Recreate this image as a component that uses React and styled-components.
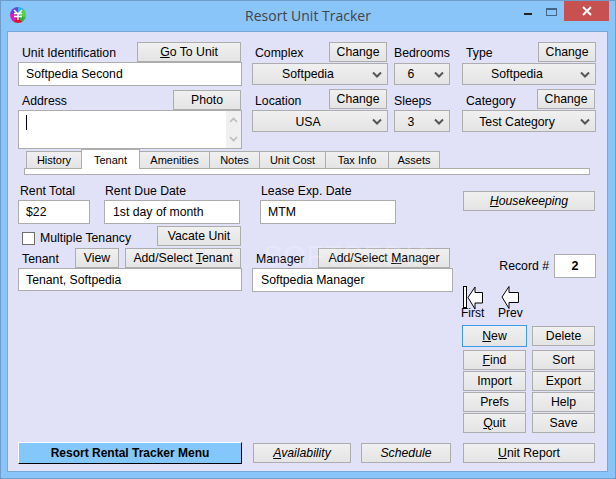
import React from 'react';
import styled, { createGlobalStyle } from 'styled-components';

const GlobalStyle = createGlobalStyle`
  html, body { margin: 0; padding: 0; background: #8ac5f9; }
  * { box-sizing: border-box; }
  body { font-family: "Liberation Sans", Arial, sans-serif; font-size: 12.25px; color: #000; }
`;

const Window = styled.div`
  position: relative;
  width: 616px;
  height: 479px;
  display: flex;
  flex-direction: column;
  background: #8ac5f9;
  border: 1px solid #6f9ccb;
  overflow: hidden;
`;

const TitleBar = styled.div`
  height: 29px;
  flex: none;
  display: grid;
  grid-template-columns: 1fr auto 1fr;
  align-items: center;
`;

const AppIcon = styled.div`
  width: 16px;
  height: 16px;
  margin-left: 9px;
  margin-top: -1px;
  border-radius: 50%;
  background: conic-gradient(#27b7d8 0 12%, #55d04a 12% 30%, #2fb53a 30% 42%, #d81b2c 42% 58%, #d41fc0 58% 78%, #6a3fe0 78% 100%);
  display: flex;
  align-items: center;
  justify-content: center;
`;

const Title = styled.div`
  font-family: "Open Sans", sans-serif;
  font-size: 14px;
  color: #444;
`;

const Controls = styled.div`
  display: flex;
  justify-content: flex-end;
  align-items: flex-start;
  height: 100%;
  padding-right: 6px;
`;

const MinBtn = styled.div`
  width: 8px;
  height: 2px;
  background: #222;
  margin-top: 12px;
  margin-right: 14px;
`;

const MaxBtn = styled.div`
  width: 11px;
  height: 8px;
  border: 1px solid #44658a;
  border-top-width: 2px;
  margin-top: 7px;
  margin-right: 7px;
`;

const CloseBtn = styled.div`
  width: 45px;
  height: 20px;
  background: #c75050;
  display: flex;
  align-items: center;
  justify-content: center;
`;

const Client = styled.div`
  flex: 1;
  margin: 1px 7px 6px 6px;
  padding: 10px 0 6px 10px;
  background: #e1e1f8;
  border: 1px solid #78a6d6;
  display: flex;
  flex-direction: column;
`;

const TopRow = styled.div`
  display: flex;
  height: 108px;
`;

const Col = styled.div`
  width: ${p => p.$w}px;
  margin-left: ${p => p.$ml || 0}px;
  display: flex;
  flex-direction: column;
`;

const Head = styled.div`
  height: 20px;
  margin-top: ${p => p.$mt || 0}px;
  display: flex;
  align-items: center;
  justify-content: space-between;
  padding-left: ${p => p.$pl ?? 4}px;
  padding-right: ${p => p.$pr ?? 1}px;
`;

const Label = styled.span`
  white-space: nowrap;
  margin-top: ${p => p.$mt ?? 1}px;
`;

const Button = styled.button`
  width: ${p => (p.$w ? `${p.$w}px` : 'auto')};
  height: ${p => p.$h || 20}px;
  margin-top: ${p => p.$mt || 0}px;
  margin-left: ${p => p.$ml || 0}px;
  padding: 0;
  flex: none;
  font: inherit;
  font-style: ${p => (p.$italic ? 'italic' : 'normal')};
  color: #000;
  white-space: nowrap;
  border: 1px solid #adadad;
  background: linear-gradient(#f0f0f0, #e4e4e4);
`;

const FocusButton = styled(Button)`
  width: 65px;
  height: 22px;
  margin: -1px 0 0 -1px;
  border-color: #3c9be8;
`;

const MenuButton = styled(Button)`
  width: 224px;
  height: 22px;
  font-weight: bold;
  font-size: 12px;
  background: #84c8fb;
  border-width: 1px;
  border-color: #fff #000 #000 #fff;
`;

const TextInput = styled.div`
  width: ${p => (p.$w ? `${p.$w}px` : '100%')};
  height: ${p => p.$h || 24}px;
  padding-left: ${p => p.$pl || 7}px;
  display: flex;
  align-items: center;
  background: #fff;
  border: 1px solid #adadad;
  white-space: nowrap;
`;

const Memo = styled.div`
  height: 39px;
  display: flex;
  justify-content: space-between;
  background: #fff;
  border: 1px solid #adadad;
  padding-left: 7px;
`;

const Caret = styled.div`
  width: 1px;
  height: 15px;
  margin-top: 4px;
  background: #000;
`;

const MemoScroll = styled.div`
  width: 15px;
  background: #f0f0f0;
  display: flex;
  flex-direction: column;
  justify-content: space-between;
  align-items: center;
  padding: 6px 0;
`;

const SelectBox = styled.div`
  position: relative;
  height: 22px;
  margin-top: 1px;
  display: flex;
  align-items: center;
  justify-content: center;
  padding-right: ${p => p.$pr || 24}px;
  padding-top: ${p => p.$pt || 0}px;
  border: 1px solid #adadad;
  background: linear-gradient(#f0f0f0, #e4e4e4);
  white-space: nowrap;
`;

const Arrow = styled.svg`
  position: absolute;
  right: 5px;
  top: 7px;
`;

const TabRow = styled.div`
  display: flex;
  align-items: flex-end;
  height: 20px;
  margin-left: 8px;
  margin-top: -1px;
`;

const Tab = styled.div`
  width: ${p => p.$w}px;
  height: ${p => (p.$active ? 20 : 18)}px;
  display: flex;
  align-items: center;
  justify-content: center;
  font-size: 11px;
  border: 1px solid #adadad;
  margin-right: -1px;
  background: ${p => (p.$active ? '#fff' : 'linear-gradient(#f0f0f0, #e4e4e4)')};
  border-bottom: ${p => (p.$active ? 'none' : '1px solid #adadad')};
  position: relative;
  z-index: ${p => (p.$active ? 1 : 0)};
`;

const TabPanel = styled.div`
  width: 566px;
  height: 7px;
  margin-left: 6px;
  margin-top: -1px;
  background: #fff;
  border: 1px solid #adadad;
`;

const Middle = styled.div`
  display: flex;
  margin-top: 8px;
`;

const MidLeft = styled.div`
  width: 445px;
  display: flex;
  flex-direction: column;
`;

const RentRow = styled.div`
  display: flex;
`;

const SmallField = styled.div`
  width: ${p => p.$w}px;
  margin-right: ${p => p.$mr || 0}px;
  display: flex;
  flex-direction: column;
`;

const SmallLabel = styled.div`
  height: 17px;
  padding-left: ${p => p.$pl ?? 2}px;
  padding-top: ${p => p.$pt ?? 1}px;
  white-space: nowrap;
`;

const LowerRow = styled.div`
  display: flex;
  margin-top: 2px;
`;

const TenantCol = styled.div`
  width: 224px;
  display: flex;
  flex-direction: column;
`;

const ManagerCol = styled.div`
  width: 201px;
  margin-left: 10px;
  margin-top: 22px;
  display: flex;
  flex-direction: column;
`;

const VacateRow = styled.div`
  height: 22px;
  display: flex;
  align-items: center;
  justify-content: space-between;
  padding: 0 1px 2px 4px;
`;

const CheckLabel = styled.label`
  display: flex;
  align-items: center;
  gap: 5px;
  margin-top: 4px;
`;

const CheckBox = styled.span`
  width: 13px;
  height: 13px;
  background: #fff;
  border: 1px solid #707070;
`;

const Split = styled.div`
  display: flex;
  align-items: center;
  gap: ${p => p.$gap || 6}px;
  margin-left: ${p => p.$ml || 0}px;
`;

const MidRight = styled.div`
  width: 133px;
  display: flex;
  flex-direction: column;
`;

const RecordRow = styled.div`
  margin-top: 43px;
  display: flex;
  align-items: center;
  justify-content: flex-end;
  gap: 5px;
`;

const RecordBox = styled.div`
  width: 42px;
  height: 24px;
  display: flex;
  align-items: center;
  justify-content: center;
  font-weight: bold;
  font-size: 12.5px;
  background: #fff;
  border: 1px solid #adadad;
`;

const NavRow = styled.div`
  display: flex;
  height: 40px;
  margin-top: 8px;
`;

const NavItem = styled.div`
  width: ${p => p.$w}px;
  display: flex;
  flex-direction: column;
  align-items: flex-start;
  padding-left: ${p => p.$pl || 0}px;
  font-size: 12px;
  line-height: 13px;
`;

const NavText = styled.span`
  margin-top: -3px;
  margin-left: ${p => p.$ml || 0}px;
`;

const ButtonGrid = styled.div`
  display: grid;
  grid-template-columns: 63px 63px;
  grid-template-rows: 23px repeat(4, 20px);
  column-gap: 6px;
  row-gap: 1px;
  align-items: start;
`;

const BottomBar = styled.div`
  display: flex;
  align-items: center;
  margin-top: 9px;
`;

const Watermark = styled.div`
  position: absolute;
  left: 262px;
  top: 238px;
  font-size: 30px;
  color: rgba(255, 255, 255, 0.22);
  pointer-events: none;
  white-space: nowrap;
`;

const Chevron = () => (
  <Arrow width="10" height="7" viewBox="0 0 10 7">
    <path d="M1 1.5 L5 5.5 L9 1.5" fill="none" stroke="#555" strokeWidth="2" />
  </Arrow>
);

const ScrollChevron = ({ up }) => (
  <svg width="9" height="6" viewBox="0 0 9 6">
    <path d={up ? 'M1 5 L4.5 1.5 L8 5' : 'M1 1 L4.5 4.5 L8 1'} fill="none" stroke="#bdbdbd" strokeWidth="1.6" />
  </svg>
);

const ArrowLeft = ({ bar }) => (
  <svg width={bar ? 22 : 20} height="24" viewBox={bar ? '0 0 22 24' : '0 0 20 24'}>
    {bar && <rect x="0.5" y="0.5" width="3" height="21" fill="#fff" stroke="#000" />}
    <path
      d={bar ? 'M5 11.5 L12 1 L12 6.5 L19.5 6.5 L19.5 17 L12 17 L12 23 Z' : 'M1 11 L8 0.5 L8 6.5 L17.5 6.5 L17.5 16.5 L8 16.5 L8 22.5 Z'}
      fill="#fff"
      stroke="#000"
    />
  </svg>
);

const tabs = [
  ['History', 56],
  ['Tenant', 59, true],
  ['Amenities', 71],
  ['Notes', 51],
  ['Unit Cost', 67],
  ['Tax Info', 64],
  ['Assets', 52],
];

function App() {
  return (
    <>
      <GlobalStyle />
      <Window>
        <TitleBar>
          <AppIcon>
            <svg width="10" height="12" viewBox="0 0 10 12">
              <path d="M1 1 L5 5 L9 1 M5 5 V11 M1 4.5 H9 M1 7.5 H9" fill="none" stroke="#fff" strokeWidth="1.4" />
            </svg>
          </AppIcon>
          <Title>Resort Unit Tracker</Title>
          <Controls>
            <MinBtn />
            <MaxBtn />
            <CloseBtn>
              <svg width="10" height="10" viewBox="0 0 10 10">
                <path d="M1 1 L9 9 M9 1 L1 9" stroke="#fff" strokeWidth="2" />
              </svg>
            </CloseBtn>
          </Controls>
        </TitleBar>

        <Client>
          <TopRow>
            <Col $w={224}>
              <Head>
                <Label>Unit Identification</Label>
                <Button $w={104}><u>G</u>o To Unit</Button>
              </Head>
              <TextInput>Softpedia Second</TextInput>
              <Head $mt={4}>
                <Label $mt={2}>Address</Label>
                <Button $w={68}>Photo</Button>
              </Head>
              <Memo>
                <Caret />
                <MemoScroll>
                  <ScrollChevron up />
                  <ScrollChevron />
                </MemoScroll>
              </Memo>
            </Col>

            <Col $w={136} $ml={10}>
              <Head $pl={3}>
                <Label>Complex</Label>
                <Button $w={58}>Change</Button>
              </Head>
              <SelectBox>Softpedia<Chevron /></SelectBox>
              <Head $pl={3} $mt={4}>
                <Label $mt={3}>Location</Label>
                <Button $w={58}>Change</Button>
              </Head>
              <SelectBox $pt={1}>USA<Chevron /></SelectBox>
            </Col>

            <Col $w={56} $ml={6}>
              <Head $pl={0}>
                <Label>Bedrooms</Label>
              </Head>
              <SelectBox $pr={22}>6<Chevron /></SelectBox>
              <Head $pl={0} $mt={4}>
                <Label $mt={3}>Sleeps</Label>
              </Head>
              <SelectBox $pr={22} $pt={1}>3<Chevron /></SelectBox>
            </Col>

            <Col $w={134} $ml={12}>
              <Head $pr={0}>
                <Label>Type</Label>
                <Button $w={58}>Change</Button>
              </Head>
              <SelectBox>Softpedia<Chevron /></SelectBox>
              <Head $mt={4}>
                <Label $mt={3}>Category</Label>
                <Button $w={58}>Change</Button>
              </Head>
              <SelectBox $pt={1}>Test Category<Chevron /></SelectBox>
            </Col>
          </TopRow>

          <TabRow>
            {tabs.map(([name, w, active]) => (
              <Tab key={name} $w={w} $active={active}>{name}</Tab>
            ))}
          </TabRow>
          <TabPanel />

          <Middle>
            <MidLeft>
              <RentRow>
                <SmallField $w={72} $mr={14}>
                  <SmallLabel>Rent Total</SmallLabel>
                  <TextInput $pl={7}>$22</TextInput>
                </SmallField>
                <SmallField $w={136} $mr={20}>
                  <SmallLabel $pl={1}>Rent Due Date</SmallLabel>
                  <TextInput $pl={8}>1st day of month</TextInput>
                </SmallField>
                <SmallField $w={136}>
                  <SmallLabel $pl={1}>Lease Exp. Date</SmallLabel>
                  <TextInput $pl={7}>MTM</TextInput>
                </SmallField>
              </RentRow>

              <LowerRow>
                <TenantCol>
                  <VacateRow>
                    <CheckLabel>
                      <CheckBox />
                      Multiple Tenancy
                    </CheckLabel>
                    <Button $w={84}>Vacate Unit</Button>
                  </VacateRow>
                  <Head>
                    <Label $mt={2}>Tenant</Label>
                    <Split>
                      <Button $w={44}>View</Button>
                      <Button $w={116}>Add/Select <u>T</u>enant</Button>
                    </Split>
                  </Head>
                  <TextInput $h={23}>Tenant, Softpedia</TextInput>
                </TenantCol>
                <ManagerCol>
                  <Head $pr={3}>
                    <Label $mt={2}>Manager</Label>
                    <Button $w={132}>Add/Select <u>M</u>anager</Button>
                  </Head>
                  <TextInput $pl={8}>Softpedia Manager</TextInput>
                </ManagerCol>
              </LowerRow>
            </MidLeft>

            <MidRight>
              <Button $w={132} $mt={8} $italic><u>H</u>ousekeeping</Button>
              <RecordRow>
                <Label $mt={0}>Record #</Label>
                <RecordBox>2</RecordBox>
              </RecordRow>
              <NavRow>
                <NavItem $w={36}>
                  <ArrowLeft bar />
                  <NavText $ml={-2}>First</NavText>
                </NavItem>
                <NavItem $w={40} $pl={2}>
                  <ArrowLeft />
                  <NavText $ml={-3}>Prev</NavText>
                </NavItem>
              </NavRow>
              <ButtonGrid>
                <FocusButton><u>N</u>ew</FocusButton>
                <Button>Delete</Button>
                <Button><u>F</u>ind</Button>
                <Button>Sort</Button>
                <Button>Import</Button>
                <Button>Export</Button>
                <Button>Prefs</Button>
                <Button>Help</Button>
                <Button><u>Q</u>uit</Button>
                <Button>Save</Button>
              </ButtonGrid>
            </MidRight>
          </Middle>

          <BottomBar>
            <MenuButton>Resort Rental Tracker Menu</MenuButton>
            <Split $gap={10} $ml={11}>
              <Button $w={98} $italic><u>A</u>vailability</Button>
              <Button $w={90} $italic>Schedule</Button>
              <Button $w={132} $ml={2}><u>U</u>nit Report</Button>
            </Split>
          </BottomBar>
        </Client>
        <Watermark>SOFTPEDIA</Watermark>
      </Window>
    </>
  );
}

export default App;
